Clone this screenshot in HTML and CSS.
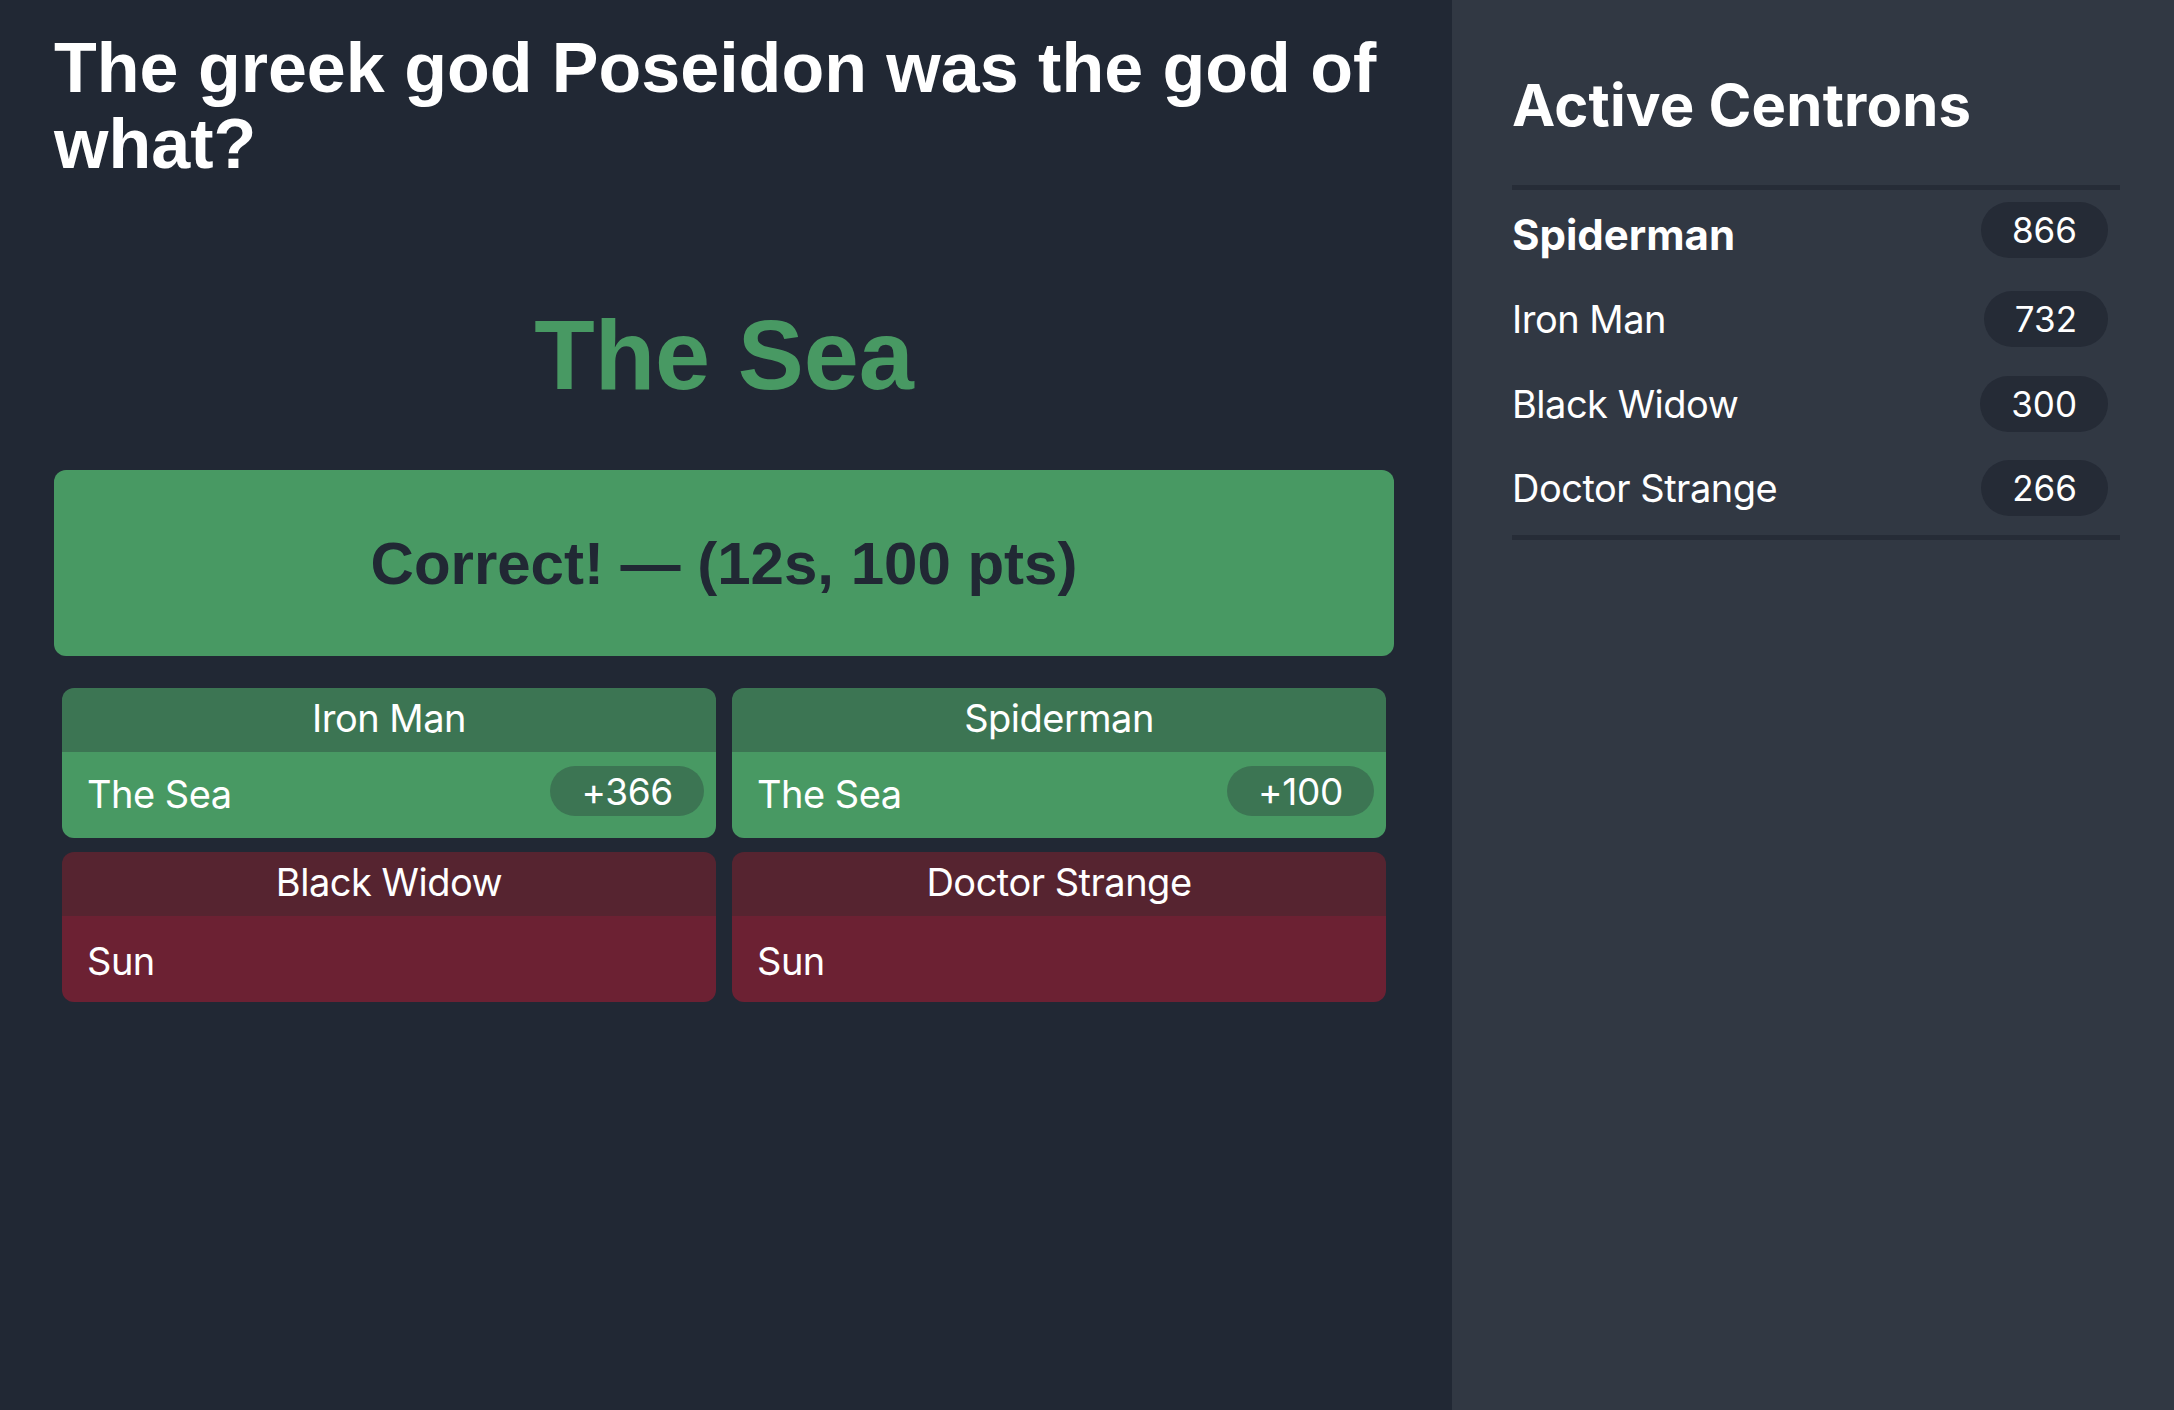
FILE: index.html
```
<!DOCTYPE html>
<html lang="en">
<head>
<meta charset="utf-8">
<title>Trivia</title>
<link rel="stylesheet" href="styles.css">
</head>
<body>
<div class="app">
  <main class="stage">
    <h1 class="question">The greek god Poseidon was the god of what?</h1>
    <div class="answer">The Sea</div>
    <div class="result">Correct! — (12s, 100 pts)</div>
    <div class="cards">
      <div class="card correct">
        <div class="card-head">Iron Man</div>
        <div class="card-body"><span class="pick">The Sea</span><span class="gain">+366</span></div>
      </div>
      <div class="card correct">
        <div class="card-head">Spiderman</div>
        <div class="card-body"><span class="pick">The Sea</span><span class="gain">+100</span></div>
      </div>
      <div class="card wrong">
        <div class="card-head">Black Widow</div>
        <div class="card-body"><span class="pick">Sun</span></div>
      </div>
      <div class="card wrong">
        <div class="card-head">Doctor Strange</div>
        <div class="card-body"><span class="pick">Sun</span></div>
      </div>
    </div>
  </main>
  <aside class="sidebar">
    <h2 class="side-title">Active Centrons</h2>
    <ul class="board">
      <li class="row leader"><span class="name">Spiderman</span><span class="score">866</span></li>
      <li class="row"><span class="name">Iron Man</span><span class="score">732</span></li>
      <li class="row"><span class="name">Black Widow</span><span class="score">300</span></li>
      <li class="row"><span class="name">Doctor Strange</span><span class="score">266</span></li>
    </ul>
  </aside>
</div>
</body>
</html>
```
FILE: styles.css
```
html, body {
  margin: 0;
  padding: 0;
}
body {
  background: #212834;
  color: #ffffff;
  font-family: Inter, "Noto Sans", sans-serif;
}
.app {
  display: flex;
  height: 1410px;
  overflow: hidden;
}
.stage {
  width: 1452px;
  flex: 0 0 1452px;
  box-sizing: border-box;
  padding: 30px 58px 0 54px;
  background: #212834;
}
.question {
  margin: 0;
  font-family: "Liberation Sans", Arial, sans-serif;
  font-weight: 700;
  font-size: 70px;
  line-height: 76px;
}
.answer {
  margin-top: 113px;
  text-align: center;
  color: #489963;
  font-family: "Liberation Sans", Arial, sans-serif;
  font-weight: 700;
  font-size: 99px;
  line-height: 119px;
}
.result {
  margin-top: 56px;
  height: 186px;
  display: flex;
  align-items: center;
  justify-content: center;
  background: #489963;
  color: #212834;
  border-radius: 12px;
  font-family: "Liberation Sans", Arial, sans-serif;
  font-weight: 700;
  font-size: 60px;
}
.cards {
  margin-top: 24px;
  padding: 8px;
  display: grid;
  grid-template-columns: 1fr 1fr;
  column-gap: 16px;
  row-gap: 14px;
}
.card {
  border-radius: 12px;
  overflow: hidden;
  font-size: 38px;
  letter-spacing: -0.5px;
}
.card-head {
  height: 64px;
  box-sizing: border-box;
  padding-bottom: 4px;
  display: flex;
  align-items: center;
  justify-content: center;
}
.card-body {
  height: 86px;
  box-sizing: border-box;
  display: flex;
  align-items: center;
  justify-content: space-between;
  padding: 0 12px 0 25px;
}
.pick {
  line-height: 1.2;
}
.wrong .card-body {
  padding-top: 5px;
}
.gain {
  align-self: flex-start;
  margin-top: 14px;
  height: 50px;
  box-sizing: border-box;
  padding: 0 31px;
  border-radius: 25px;
  background: #3c7553;
  font-size: 37px;
  letter-spacing: -0.3px;
  display: flex;
  align-items: center;
}
.correct .card-head { background: #3c7553; }
.correct .card-body { background: #489963; }
.wrong .card-head { background: #562430; }
.wrong .card-body { background: #6c2133; }

.sidebar {
  flex: 1;
  background: #313843;
  padding: 70px 54px 0 60px;
}
.side-title {
  margin: 0;
  font-weight: 700;
  font-size: 58px;
  line-height: 70px;
  letter-spacing: 0.2px;
}
.board {
  list-style: none;
  margin: 45px 0 0;
  padding: 2.5px 0 4.5px;
  border-top: 5px solid #262c37;
  border-bottom: 5px solid #262c37;
}
.row {
  height: 84.5px;
  display: flex;
  align-items: center;
  justify-content: space-between;
  padding-right: 12px;
  font-size: 38px;
  letter-spacing: -0.5px;
}
.leader .name {
  font-weight: 700;
  font-size: 42px;
  letter-spacing: 0;
}
.leader .score {
  margin-bottom: 10px;
}
.score {
  height: 56px;
  box-sizing: border-box;
  padding: 0 31px;
  border-radius: 28px;
  background: #252b36;
  font-size: 35px;
  letter-spacing: 0;
  display: flex;
  align-items: center;
}
```
